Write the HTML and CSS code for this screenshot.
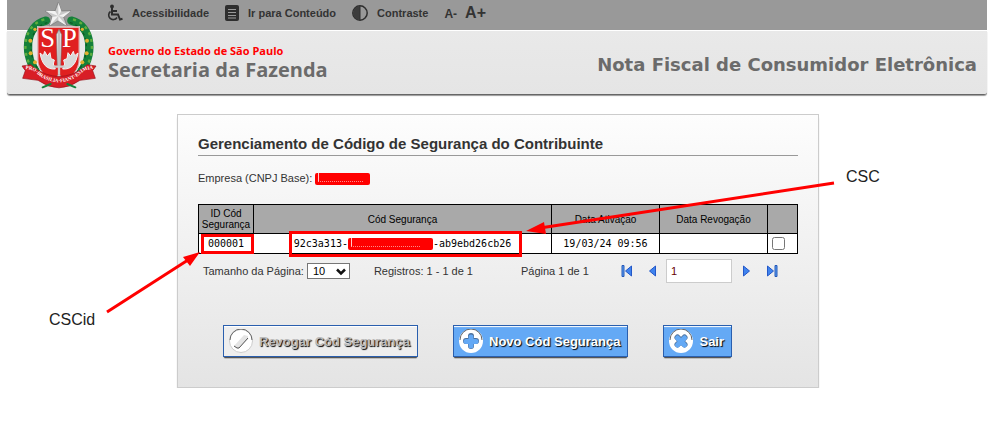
FILE: index.html
```html
<!DOCTYPE html>
<html lang="pt-br">
<head>
    <meta charset="UTF-8">
    <meta name="viewport" content="width=device-width, initial-scale=1.0">
    <title>Nota Fiscal de Consumidor Eletrônica</title>
    <link rel="stylesheet" href="styles.css">
</head>
<body>
    <header class="header">
        <nav class="toolbar">
            <a href="#" class="tool">
                <svg width="16" height="18" viewBox="0 0 16 18" fill="none" stroke="#2e2e2e" stroke-width="2">
                    <circle cx="5" cy="2.5" r="1.9" fill="#2e2e2e" stroke="none"/>
                    <path d="M5 4v6.500h6l2 5 2.500-.8M5 7h5"/>
                    <path d="M3.500 7.500a4.500 4.500 0 1 0 6.500 6" stroke-width="1.600"/>
                </svg>
                Acessibilidade
            </a>
            <a href="#conteudo" class="tool">
                <svg width="14" height="16" viewBox="0 0 14 16">
                    <rect width="14" height="16" rx="2" fill="#2e2e2e"/>
                    <path d="M3 4.500h8M3 7.500h8M3 10.500h8M3 13h8" stroke="#999" stroke-width="1"/>
                </svg>
                Ir para Conteúdo
            </a>
            <a href="#" class="tool">
                <svg width="16" height="16" viewBox="0 0 16 16">
                    <circle cx="8" cy="8" r="7.200" fill="#999" stroke="#2e2e2e" stroke-width="1.500"/>
                    <path d="M8 1a7 7 0 0 0 0 14z" fill="#3c3c3c"/>
                    <path d="M8 1v14" stroke="#2e2e2e"/>
                </svg>
                Contraste
            </a>
            <div class="font-size">
                <a href="#" class="smaller">A-</a>
                <a href="#" class="larger">A+</a>
            </div>
        </nav>
        <div class="banner">
            <div class="brand">
                <span class="gov">Governo do Estado de São Paulo</span>
                <span class="dept">Secretaria da Fazenda</span>
            </div>
            <div class="system">Nota Fiscal de Consumidor Eletrônica</div>
        </div>
        <svg class="emblem" viewBox="0 0 300 300">
            <g fill="none" stroke="#15803a" stroke-width="25" stroke-linecap="round">
                <path d="M108 62C44 78 36 170 88 226"/>
                <path d="M184 62C248 78 256 170 204 226"/>
            </g>
            <g fill="none" stroke="#5fae3f" stroke-width="7" stroke-dasharray="9 12">
                <path d="M103 58C34 78 30 170 80 226"/>
                <path d="M189 58C258 78 262 170 212 226"/>
            </g>
            <g fill="none" stroke="#0a5a26" stroke-width="4" stroke-dasharray="8 9">
                <path d="M112 68C54 82 46 170 96 222"/>
                <path d="M180 68C238 82 246 170 196 222"/>
            </g>
            <g fill="#e0b030">
                <circle cx="75" cy="88" r="5"/><circle cx="61" cy="122" r="6"/><circle cx="62" cy="160" r="6"/><circle cx="75" cy="187" r="6"/>
                <circle cx="217" cy="88" r="5"/><circle cx="231" cy="122" r="6"/><circle cx="230" cy="160" r="6"/><circle cx="217" cy="187" r="6"/>
            </g>
            <path d="M83 81H208V178Q208 226 146 255Q83 226 83 178Z" fill="#e02020" stroke="#fff" stroke-width="4"/>
            <path d="M83 81H208V178Q208 226 146 255Q83 226 83 178Z" fill="none" stroke="#7c1515" stroke-width="1"/>
            <g fill="#d9d9d9" stroke="#f3f3f3" stroke-width="3">
                <path d="M136 207c-26 2-40-14-46-48l10 8 4-13 8 14 8-10 3 18 10 4-3 12z"/>
                <path d="M158 207c26 2 40-14 46-48l-10 8-4-13-8 14-8-10-3 18-10 4 3 12z"/>
            </g>
            <path d="M147 88l8 16-3 94h-10l-3-94z" fill="#ddd" stroke="#777" stroke-width="2"/>
            <path d="M147 92v104" stroke="#888" stroke-width="2"/>
            <path d="M130 200h34M147 200v25" stroke="#ccc" stroke-width="7"/>
            <circle cx="147" cy="230" r="6" fill="#ddd" stroke="#888"/>
            <text x="113" y="142" class="initials">S</text>
            <text x="178" y="142" class="initials">P</text>
            <path d="M36 198l27-4 8 8q76 55 152 0l8-8 27 4-10 14 8 23-46 6q-63 45-126 0l-46-6 8-23z" fill="#d81e26" stroke="#971019" stroke-width="2"/>
            <path id="motto" d="M42 207Q70 206 84 224Q147 270 210 224Q224 206 254 207" fill="none"/>
            <text class="motto"><textPath href="#motto" startOffset="50%">PRO·BRASILIA·FIANT·EXIMIA</textPath></text>
            <path d="M98 262l24-10M196 262l-24-10" stroke="#15803a" stroke-width="6" stroke-linecap="round"/>
            <path d="M145 7l9 26 29-1-22 19 10 27-26-16-26 16 8-27-22-19 30 1z" fill="#c9c9c9" stroke="#707070" stroke-width="2"/>
            <path d="M145 48V7l9 26zM145 48l38-16-22 19zM145 48l26 30-26-16zM145 48l-26 30 8-27zM145 48l-40-16 30 1z" fill="#f2f2f2"/>
        </svg>
    </header>

    <main class="panel" id="conteudo">
        <h1>Gerenciamento de Código de Segurança do Contribuinte</h1>
        <p class="company">Empresa (CNPJ Base): <span class="redacted short"></span></p>

        <table class="codes">
            <colgroup>
                <col class="col-id">
                <col>
                <col class="col-date">
                <col class="col-date">
                <col class="col-check">
            </colgroup>
            <thead>
                <tr>
                    <th>ID Cód Segurança</th>
                    <th>Cód Segurança</th>
                    <th>Data Ativação</th>
                    <th>Data Revogação</th>
                    <th></th>
                </tr>
            </thead>
            <tbody>
                <tr>
                    <td>000001</td>
                    <td>92c3a313-<span class="redacted long"></span>-ab9ebd26cb26</td>
                    <td>19/03/24 09:56</td>
                    <td></td>
                    <td><input type="checkbox" aria-label="Selecionar código 000001"></td>
                </tr>
            </tbody>
        </table>

        <div class="pager">
            <label for="pageSize">Tamanho da Página:</label>
            <div class="select">
                <select id="pageSize">
                    <option>10</option>
                    <option>20</option>
                    <option>50</option>
                </select>
                <svg width="10" height="8" viewBox="0 0 10 8" fill="none" stroke="#111" stroke-width="2.500"><path d="M1 1.500l4 4 4-4"/></svg>
            </div>
            <span class="records">Registros: 1 - 1 de 1</span>
            <span class="page">Página 1 de 1</span>
            <button type="button" class="nav first" aria-label="Primeira página">
                <svg width="12" height="12" viewBox="0 0 12 12"><path d="M1 .5h2v11H1z" fill="#5b9cf0" stroke="#2458b8"/><path d="M10.500 1v10L4.500 6z" fill="#3f83ee" stroke="#2458c8"/></svg>
            </button>
            <button type="button" class="nav prev" aria-label="Página anterior">
                <svg width="7" height="12" viewBox="0 0 7 12"><path d="M6.500 1v10L.5 6z" fill="#3f83ee" stroke="#2458c8"/></svg>
            </button>
            <input type="text" class="page-number" value="1" aria-label="Página">
            <button type="button" class="nav next" aria-label="Próxima página">
                <svg width="7" height="12" viewBox="0 0 7 12"><path d="M.5 1v10l6-5z" fill="#3f83ee" stroke="#2458c8"/></svg>
            </button>
            <button type="button" class="nav last" aria-label="Última página">
                <svg width="12" height="12" viewBox="0 0 12 12"><path d="M9 .5h2v11H9z" fill="#5b9cf0" stroke="#2458b8"/><path d="M1.500 1v10l6-5z" fill="#3f83ee" stroke="#2458c8"/></svg>
            </button>
        </div>

        <div class="actions">
            <button type="button" class="btn btn-light">
                <svg width="24" height="24" viewBox="0 0 24 24">
                    <circle cx="12" cy="12" r="11.500" fill="#fff" stroke="#ccc"/>
                    <path d="M1 11a11 11 0 0 1 22 0" fill="none" stroke="#666"/>
                    <path d="M5 17L15 6l4 1v3L9 20z" fill="#e4e4e4"/>
                    <path d="M5 17l3 2h2l9-10" fill="none" stroke="#555"/>
                </svg>
                Revogar Cód Segurança
            </button>
            <button type="button" class="btn">
                <svg width="24" height="24" viewBox="0 0 24 24">
                    <circle cx="12" cy="12" r="12" fill="#fff"/>
                    <path d="M1 11a11 11 0 0 1 22 0" fill="none" stroke="#666"/>
                    <path d="M12 7v10M7 12h10" stroke="#4c6f99" stroke-width="6" stroke-linecap="round"/>
                    <path d="M12 8v9M7 12.500h10" stroke="#64a9f5" stroke-width="5" stroke-linecap="round"/>
                </svg>
                Novo Cód Segurança
            </button>
            <button type="button" class="btn">
                <svg width="24" height="24" viewBox="0 0 24 24">
                    <circle cx="12" cy="12" r="12" fill="#fff"/>
                    <path d="M1 11a11 11 0 0 1 22 0" fill="none" stroke="#666"/>
                    <path d="M8.500 8.500l7 7M15.500 8.500l-7 7" stroke="#4c6f99" stroke-width="6" stroke-linecap="round"/>
                    <path d="M8.500 9l7 7M15.500 9l-7 7" stroke="#64a9f5" stroke-width="5" stroke-linecap="round"/>
                </svg>
                Sair
            </button>
        </div>

        <!-- anotações sobre a tela -->
        <svg class="notes" width="640" height="273" viewBox="178 115 640 273">
            <g fill="none" stroke="#f00" stroke-width="3">
                <rect x="202.500" y="235.500" width="50" height="17"/>
                <rect x="290.500" y="232.500" width="230" height="23"/>
                <path d="M834 183L540 228M107 312L188 260"/>
            </g>
            <path d="M526 231l18-9 2 12zM200 252l-17 5 7 9z" fill="#f00"/>
            <text x="846" y="182">CSC</text>
            <text x="49" y="325">CSCid</text>
        </svg>
    </main>
</body>
</html>
```
FILE: styles.css
```css
* {
    box-sizing: border-box;
}
body {
    margin: 0;
    padding-left: 7px;
    background: #fff;
    color: #333;
    font-family: Arial, "Liberation Sans", sans-serif;
    font-size: 11px;
}
a {
    color: #333;
    text-decoration: none;
}
button, input, select {
    font-family: inherit;
}

/* topo */
.header {
    position: relative;
    margin-right: 2px;
}
.toolbar {
    display: flex;
    align-items: center;
    gap: 16px;
    height: 30px;
    padding: 0 0 4px 100px;
    background: #999;
    font-weight: bold;
}
.tool {
    display: flex;
    align-items: center;
    gap: 9px;
}
.font-size {
    display: flex;
    align-items: baseline;
    gap: 8px;
}
.smaller {
    font-size: 12px;
}
.larger {
    font-size: 16px;
}
.banner {
    display: flex;
    justify-content: space-between;
    height: 64px;
    margin-top: 1px;
    padding: 12px 10px 0 101px;
    background: linear-gradient(#e9e9e9, #e5e5e5);
    border-bottom: 1px solid #666;
    border-radius: 0 0 3px 3px;
    box-shadow: 0 1px 1px #999;
}
.brand {
    display: flex;
    flex-direction: column;
    font-family: "Open Sans", sans-serif;
    font-weight: bold;
}
.gov {
    color: #f00;
    font-size: 11px;
    line-height: 15px;
}
.dept {
    color: #6b6b6b;
    font-size: 20px;
    line-height: 24px;
}
.system {
    padding-top: 10px;
    color: #6b6b6b;
    font-family: Verdana, "DejaVu Sans", sans-serif;
    font-size: 18px;
    font-weight: bold;
    line-height: 24px;
}
.emblem {
    position: absolute;
    left: 3px;
    top: 0;
    width: 100px;
    height: 100px;
}
.initials {
    fill: #fff;
    font: 80px "Liberation Serif", serif;
    text-anchor: middle;
}
.motto {
    fill: #fff;
    font: bold 15px "Liberation Serif", serif;
    text-anchor: middle;
}

/* conteúdo */
.panel {
    position: relative;
    max-width: 642px;
    margin: 19px auto 0;
    padding: 20px 20px 30px;
    background: linear-gradient(#fdfdfd, #e4e4e4);
    border: 1px solid #ccc;
    box-shadow: 0 2px 0 -1px #777, 0 3px 2px -1px #999;
}
h1 {
    margin: 0;
    padding-bottom: 2px;
    border-bottom: 1px solid #999;
    font-size: 15px;
    line-height: 18px;
}
.company {
    margin: 14px 0 18px;
    line-height: 16px;
}
.redacted {
    display: inline-block;
    height: 12px;
    background: #f00;
    border-radius: 2px;
    vertical-align: middle;
}
.short {
    width: 55px;
}
.long {
    width: 85px;
}
/* restos do texto riscado */
.redacted::before {
    content: "";
    display: block;
    width: 80%;
    height: 8px;
    margin-left: 3px;
    border-left: 1px solid #fcc;
    border-bottom: 1px dotted #f88;
}
.codes {
    width: 100%;
    table-layout: fixed;
    border-collapse: collapse;
    color: #000;
    font-size: 10px;
    line-height: 11px;
}
.col-id {
    width: 55px;
}
.col-date {
    width: 108px;
}
.col-check {
    width: 30px;
}
th, td {
    padding: 0;
    border: 1px solid #000;
    text-align: center;
}
th {
    height: 29px;
    background: #a9a9a9;
    font-weight: normal;
}
td {
    height: 20px;
    background: #fff;
    font-family: Consolas, "DejaVu Sans Mono", monospace;
}
td:last-child {
    text-align: left;
}
td input {
    display: block;
    margin: 0 0 0 4px;
}
.pager {
    display: flex;
    align-items: center;
    height: 24px;
    margin-top: 5px;
    padding-left: 5px;
}
.select {
    position: relative;
    margin-left: 3px;
}
.select select {
    display: block;
    width: 43px;
    height: 16px;
    padding: 0 0 0 5px;
    appearance: none;
    background: #fff;
    border: 1px solid #767676;
    border-radius: 0;
    color: #000;
    font-size: 11px;
}
.select svg {
    position: absolute;
    right: 4px;
    top: 5px;
    pointer-events: none;
}
.records {
    width: 147px;
    margin-left: 24px;
}
.page {
    width: 100px;
}
.nav {
    display: flex;
    padding: 0;
    background: none;
    border: none;
    cursor: pointer;
}
.prev {
    margin-left: 16px;
}
.last {
    margin-left: 16px;
}
.page-number {
    width: 66px;
    height: 24px;
    margin: 0 11px 0 10px;
    padding: 0 4px;
    background: #fff;
    border: 1px solid #ccc;
    color: #600;
    font-size: 11px;
}
.actions {
    display: flex;
    gap: 35px;
    margin-top: 42px;
    padding-left: 25px;
}
.btn {
    display: flex;
    align-items: center;
    gap: 6px;
    height: 32px;
    padding: 0 7px 0 5px;
    background: #64a9f5;
    border: 1px solid #2a5fae;
    box-shadow: 0 3px 1px -2px #555, 0 2px 1px -1px #777, inset 0 2px 1px -1px #fff;
    color: #fff;
    font-size: 13px;
    font-weight: bold;
    text-shadow: 1px 1px 1px #000;
    white-space: nowrap;
    cursor: pointer;
}
.btn-light {
    background: #eee;
    color: #bbb;
}
.notes {
    position: absolute;
    left: 0;
    top: 0;
    overflow: visible;
    pointer-events: none;
}
.notes text {
    fill: #222;
    font-size: 16px;
}
```
